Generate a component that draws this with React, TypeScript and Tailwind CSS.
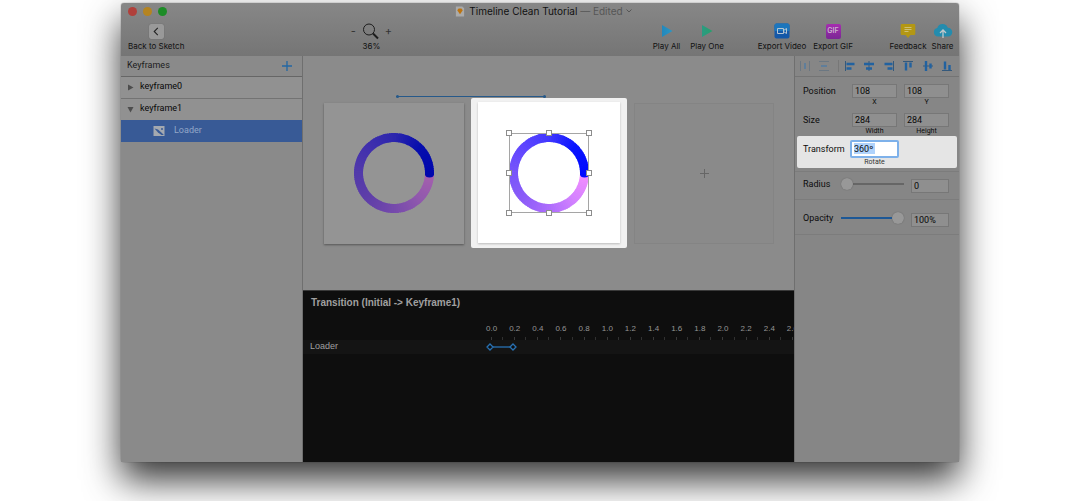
import type { ReactNode } from "react";
import clsx from "clsx";

const TICKS = ["0.0", "0.2", "0.4", "0.6", "0.8", "1.0", "1.2", "1.4", "1.6", "1.8", "2.0", "2.2", "2.4", "2.6"];

// Ring colors, counter-clockwise starting at 3 o'clock
const STOPS = [
  [0, 10, 255],
  [10, 20, 255],
  [66, 56, 255],
  [95, 70, 255],
  [120, 85, 250],
  [140, 92, 248],
  [172, 108, 252],
  [212, 130, 255],
  [244, 142, 255],
];

function ringColor(t: number) {
  const pos = t * (STOPS.length - 1);
  const i = Math.min(Math.floor(pos), STOPS.length - 2);
  const [r, g, b] = STOPS[i].map((c, k) => Math.round(c + (STOPS[i + 1][k] - c) * (pos - i)));
  return `rgb(${r},${g},${b})`;
}

function Loader() {
  const n = 120;
  const point = (a: number) => `${40 + 35.5 * Math.cos(a)} ${40 - 35.5 * Math.sin(a)}`;
  return (
    <svg viewBox="0 0 80 80" className="size-20" fill="none" strokeWidth="9">
      {Array.from({ length: n }, (_, i) => {
        const a = (i / n) * Math.PI * 2;
        const b = Math.min(((i + 1.4) / n) * Math.PI * 2, Math.PI * 2);
        return <path key={i} d={`M${point(a)} A35.5 35.5 0 0 0 ${point(b)}`} stroke={ringColor(i / (n - 1))} />;
      })}
      <path d="M71 39.5h9v2q-.3 3-4.500 3t-4.500-3z" fill="#000aff" stroke="none" />
    </svg>
  );
}

function Selection() {
  const spots = [0, 40, 80];
  return (
    <svg viewBox="-3 -3 86 86" className="absolute size-[86px]" fill="none">
      <rect x="0.500" y="0.500" width="79" height="79" stroke="#a5a5a5" />
      {spots.flatMap(x =>
        spots
          .filter(y => !(x === 40 && y === 40))
          .map(y => (
            <rect key={`${x}-${y}`} x={x - 2.5} y={y - 2.5} width="5" height="5" fill="#fff" stroke="#8c8c8c" />
          ))
      )}
    </svg>
  );
}

function Tool({ label, className, children }: { label: string; className?: string; children: ReactNode }) {
  return (
    <button className={clsx("flex shrink-0 flex-col items-center gap-[2px] whitespace-nowrap", className)}>
      <span className="flex h-4 items-center justify-center">{children}</span>
      <span className="text-[8px] leading-[10px]">{label}</span>
    </button>
  );
}

function PlayIcon({ from, to, id }: { from: string; to: string; id: string }) {
  return (
    <svg viewBox="0 0 12 14" className="h-[14px] w-3">
      <defs>
        <linearGradient id={id} x1="0" x2="1">
          <stop stopColor={from} />
          <stop offset="1" stopColor={to} />
        </linearGradient>
      </defs>
      <path d="M1 1l10.500 6L1 13z" fill={`url(#${id})`} />
    </svg>
  );
}

function Toolbar() {
  return (
    <header className="h-[53px] rounded-t-[3px] bg-linear-to-b from-[#878787] to-[#757575] text-[#111]">
      <div className="grid h-4 grid-cols-[1fr_auto_1fr] items-center pl-[7px]">
        <div className="flex gap-[6px]">
          <button aria-label="Close" className="size-[9px] rounded-full bg-[#b0403b]" />
          <button aria-label="Minimize" className="size-[9px] rounded-full bg-[#b58420]" />
          <button aria-label="Zoom" className="size-[9px] rounded-full bg-[#1c8c26]" />
        </div>
        <h1 className="flex items-center gap-1 text-[10px] leading-4">
          <svg viewBox="0 0 10 12" className="h-[11px] w-[10px]">
            <path d="M.5 .5H7.500L9.500 2.500v9h-9z" fill="#aaa" />
            <path d="M2 4.500l1.500-1.700h3L8 4.500 5 9z" fill="#bd7410" />
          </svg>
          <span>
            Timeline Clean Tutorial <span className="text-[#565656]">— Edited</span>
          </span>
          <svg viewBox="0 0 6 4" className="-ml-px h-1 w-[6px]" fill="none" stroke="#565656">
            <path d="M.5.5L3 3 5.500.5" />
          </svg>
        </h1>
      </div>
      <div className="flex items-start pt-1 pr-[5px] pl-[7px]">
        <Tool label="Back to Sketch">
          <span className="flex size-[15px] items-center justify-center rounded-[2px] bg-[#999] shadow-[0_0_1px_#555]">
            <svg viewBox="0 0 6 10" className="h-[9px] w-[6px]" fill="none" stroke="#222" strokeWidth="1.200">
              <path d="M5 1L1 5l4 4" />
            </svg>
          </span>
        </Tool>
        <div className="ml-[167px] flex w-10 flex-col items-center gap-[2px]">
          <div className="flex h-4 items-center gap-[6px] text-[11px] leading-4 text-[#333]">
            <button aria-label="Zoom out">-</button>
            <svg viewBox="0 0 17 17" className="size-[17px]" fill="none" stroke="#1c1c1c">
              <circle cx="7" cy="6.500" r="5.500" />
              <path d="M11 10.500l5 5" strokeWidth="2" />
            </svg>
            <button aria-label="Zoom in">+</button>
          </div>
          <span className="text-[8px] leading-[10px]">36%</span>
        </div>
        <div className="ml-auto flex">
          <Tool label="Play All" className="w-[29px]">
            <PlayIcon id="playAll" from="#2387bb" to="#2a97c4" />
          </Tool>
          <Tool label="Play One" className="ml-2 w-[36px]">
            <PlayIcon id="playOne" from="#2b9a82" to="#27a06c" />
          </Tool>
          <Tool label="Export Video" className="ml-[32px] w-[50px]">
            <svg viewBox="0 0 16 16" className="size-4">
              <rect x="0.500" y="0.500" width="15" height="15" rx="2" fill="#1458a8" />
              <path d="M.5 8V2.500a2 2 0 012-2h11a2 2 0 012 2V8z" fill="#1b76bd" />
              <path d="M3.500 5.500h6v5h-6zM9.500 7.500l3-2v5l-3-2" fill="none" stroke="#b4c5d2" />
            </svg>
          </Tool>
          <Tool label="Export GIF" className="ml-[5px] w-[42px]">
            <span className="flex size-[15px] items-center justify-center rounded-[2px] bg-linear-to-b from-[#a62db0] to-[#7b2695] text-[7px] font-semibold text-[#c9b3cd]">
              GIF
            </span>
          </Tool>
          <Tool label="Feedback" className="ml-[35px] w-[38px]">
            <svg viewBox="0 0 16 16" className="size-4">
              <path d="M2 1h12q1.300 0 1.300 1.300v8.400q0 1.300-1.300 1.300h-3.500L8 15l-2.500-3H2Q.7 12 .7 10.700V2.300Q.7 1 2 1z" fill="#b39714" />
              <path d="M4.500 4.500h7M4.500 6.500h7M4.500 8.500h4" stroke="#cdbf75" />
            </svg>
          </Tool>
          <Tool label="Share" className="ml-[4px] w-[23px]">
            <svg viewBox="0 0 20 16" className="h-4 w-5">
              <path d="M5 13.500a4.300 4.300 0 01-.7-8.500A5.500 5.500 0 0114.800 4.700 4.400 4.400 0 0115 13.500z" fill="#248cae" />
              <path d="M10 15V7.500M7 10l3-3 3 3" fill="none" stroke="#c0c8cb" strokeWidth="1.300" />
            </svg>
          </Tool>
        </div>
      </div>
    </header>
  );
}

function Sidebar() {
  return (
    <nav className="w-[182px] shrink-0 border-r border-[#6f6f6f] bg-[#8a8a8a] font-[Roboto,sans-serif] text-[9px]">
      <div className="flex h-[21px] items-center justify-between border-b border-[#666] pr-[10px] pl-[6px]">
        <h2>Keyframes</h2>
        <button aria-label="Add keyframe">
          <svg viewBox="0 0 10 10" className="size-[10px]" stroke="#2367a4" strokeWidth="1.300">
            <path d="M5 0v10M0 5h10" />
          </svg>
        </button>
      </div>
      <ul className="text-[#080808]">
        <li className="flex h-[22px] items-center gap-[6px] border-b border-[#737373] bg-[#919191] pb-px pl-[6px]">
          <svg viewBox="0 0 7 7" className="size-[7px]" fill="#4d4d4d">
            <path d="M1 .5L6.500 3.500 1 6.500z" />
          </svg>
          keyframe0
        </li>
        <li className="flex h-[21px] items-center gap-[6px] bg-[#919191] pb-px pl-[6px]">
          <svg viewBox="0 0 7 7" className="size-[7px]" fill="#4d4d4d">
            <path d="M.5 1h6L3.500 6.500z" />
          </svg>
          keyframe1
        </li>
        <li className="flex h-[22px] items-center gap-[9px] bg-[#385a96] pb-px pl-8 text-[#93a7c8]">
          <svg viewBox="0 0 12 10" className="h-[10px] w-3">
            <path d="M.5 0h11v10H.5z" fill="#a4a9b0" />
            <path d="M1.500 2.500l3.500 1 5.500 5V9H8.500L5 6.500z" fill="#385a96" />
            <circle cx="9" cy="3" r="1" fill="#385a96" />
          </svg>
          Loader
        </li>
      </ul>
    </nav>
  );
}

function Canvas() {
  return (
    <section className="h-[234px] bg-[#8b8b8b] pt-[39px]">
      <div className="ml-[93px] flex h-[3px] w-[150px] items-center justify-between bg-[linear-gradient(#26598a,#26598a)] bg-[length:100%_1px] bg-center bg-no-repeat">
        <span className="size-[3px] rounded-full bg-[#26598a]" />
        <span className="size-[3px] rounded-full bg-[#26598a]" />
      </div>
      <div className="flex items-center gap-[7px] pl-[21px]">
        <div className="flex h-[141px] w-[140px] shrink-0 items-center justify-center bg-[#949494] shadow-[0_1px_2px_#555]">
          <div className="brightness-[0.68]">
            <Loader />
          </div>
        </div>
        <div className="shrink-0 rounded-[2px] bg-[#f1f1f1] px-[7px] pt-1 pb-[5px]">
          <div className="relative flex h-[141px] w-[142px] items-center justify-center bg-white shadow-[0_1px_2px_#bbb]">
            <Loader />
            <Selection />
          </div>
        </div>
        <button
          aria-label="Add keyframe"
          className="flex h-[141px] w-[140px] shrink-0 items-center justify-center border border-[#848484] bg-[#8a8a8a]"
        >
          <svg viewBox="0 0 9 9" className="size-[9px]" stroke="#666">
            <path d="M4.500 0v9M0 4.500h9" />
          </svg>
        </button>
      </div>
    </section>
  );
}

function Timeline() {
  return (
    <section className="min-h-[172px] flex-1 overflow-hidden border-t border-[#3a3a3a] bg-[#0e0e0e] font-['Liberation_Sans',sans-serif] text-[#a0a0a0]">
      <h2 className="pt-[6px] pl-2 text-[10px] leading-3 font-bold">{"Transition (Initial -> Keyframe1)"}</h2>
      <div className="mt-[15px] ml-[177px] grid w-[324px] grid-cols-14">
        {TICKS.map(t => (
          <div key={t}>
            <div className="text-center text-[8px] leading-[10px] text-[#959595]">{t}</div>
            <div className="mt-[3px] flex h-[3px] justify-between">
              <span className="ml-[11px] w-px bg-[#383838]" />
              <span className="w-px bg-[#303030]" />
            </div>
          </div>
        ))}
      </div>
      <div className="flex h-[14px] items-center bg-[#141414] pl-[7px] text-[9px]">
        <span className="w-[176px]">Loader</span>
        <svg viewBox="0 0 32 8" className="h-2 w-8" fill="#0e0e0e" stroke="#2871b3" strokeWidth="1.300">
          <path d="M7 4h18" />
          <path d="M4 1l3 3-3 3-3-3zM27 1l3 3-3 3-3-3z" />
        </svg>
      </div>
    </section>
  );
}

const ALIGNMENTS = [
  { label: "Distribute horizontally", dim: true, thin: "M1.500 1v10M10.500 1v10", thick: "M6 3v6" },
  { label: "Distribute vertically", dim: true, thin: "M1 1.500h10M1 10.500h10", thick: "M3 6h6" },
  { label: "Align left", thin: "M1.500 1v10", thick: "M2.500 4h8M2.500 8.500h5" },
  { label: "Align center", thin: "M6 1v10", thick: "M1 4h10M3 8.500h6" },
  { label: "Align right", thin: "M10.500 1v10", thick: "M1.500 4h8M4.500 8.500h5" },
  { label: "Align top", thin: "M1 1.500h10", thick: "M4 2.500v8M8.500 2.500v5" },
  { label: "Align middle", thin: "M1 6h10", thick: "M4 1v10M8.500 3.500v5" },
  { label: "Align bottom", thin: "M1 10.500h10", thick: "M4 1.500v8M8.500 5v5" },
];

const INPUT = "h-[14px] border border-[#777] bg-[#8f8f8f] px-[2px] text-[9px] text-[#080808]";

function Field({ label, caption, value }: { label: string; caption: string; value: string }) {
  return (
    <label className="flex w-[45px] flex-col items-center">
      <input aria-label={label} defaultValue={value} className={clsx(INPUT, "w-full")} />
      <span className="text-[7px] leading-[9px]">{caption}</span>
    </label>
  );
}

const SLIDER =
  "m-0 h-3 w-full appearance-none bg-transparent bg-[length:100%_2px] bg-center bg-no-repeat [&::-webkit-slider-thumb]:size-3 [&::-webkit-slider-thumb]:appearance-none [&::-webkit-slider-thumb]:rounded-full [&::-webkit-slider-thumb]:bg-[#989898] [&::-webkit-slider-thumb]:shadow-[0_0_1px_#555]";

function Inspector() {
  return (
    <aside className="w-[165px] shrink-0 border-l border-[#6f6f6f] bg-[#868686] font-[Roboto,sans-serif] text-[9px] leading-[14px] text-[#0c0c0c]">
      <div className="flex h-[21px] items-center justify-between border-b border-[#747474] pr-[6px] pl-1">
        {ALIGNMENTS.map((a, i) => (
          <button key={a.label} aria-label={a.label} className={clsx(i === 2 && "border-l border-[#777] pl-[5px]")}>
            <svg viewBox="0 0 12 12" className="size-3" fill="none">
              <path d={a.thin} stroke={a.dim ? "#6b7782" : "#34597c"} />
              <path d={a.thick} stroke={a.dim ? "#527ba2" : "#2262a0"} strokeWidth={a.dim ? 1.5 : 2.4} />
            </svg>
          </button>
        ))}
      </div>
      <div className="flex justify-between pt-[7px] pr-[10px] pl-2">
        <span className="w-[42px]">Position</span>
        <Field label="Position X" caption="X" value="108" />
        <Field label="Position Y" caption="Y" value="108" />
      </div>
      <div className="flex justify-between pt-[6px] pr-[10px] pl-2">
        <span className="w-[42px]">Size</span>
        <Field label="Width" caption="Width" value="284" />
        <Field label="Height" caption="Height" value="284" />
      </div>
      <div className="mx-[2px] flex h-8 gap-[5px] rounded-[2px] bg-[#e5e5e5] pt-1 pl-[6px]">
        <label htmlFor="rotate" className="w-[42px] pt-[2px]">
          Transform
        </label>
        <div className="flex flex-col items-center">
          <input
            id="rotate"
            defaultValue="360º"
            className="h-[18px] w-[49px] rounded-[2px] border-2 border-[#7eb1ea] bg-white bg-[linear-gradient(#b0d3fc,#b0d3fc)] bg-[length:21px_11px] bg-[position:2px_1px] bg-no-repeat px-[2px] text-[9px]"
          />
          <span className="text-[7px] leading-[9px] text-[#333]">Rotate</span>
        </div>
      </div>
      <div className="mt-[3px] flex border-y border-[#7c7c7c] pt-[5px] pr-[10px] pb-[6px] pl-2">
        <label htmlFor="radius" className="w-[38px]">
          Radius
        </label>
        <div className="flex flex-1 pt-px pr-[7px]">
          <input
            id="radius"
            type="range"
            defaultValue={0}
            className={clsx(SLIDER, "bg-[linear-gradient(#666,#666)]")}
          />
        </div>
        <input aria-label="Radius value" defaultValue="0" className={clsx(INPUT, "mt-[2px] w-[38px]")} />
      </div>
      <div className="flex border-b border-[#7c7c7c] pt-[11px] pr-[10px] pb-[7px] pl-2">
        <label htmlFor="opacity" className="w-[38px]">
          Opacity
        </label>
        <div className="flex flex-1 pt-px pr-[7px]">
          <input
            id="opacity"
            type="range"
            defaultValue={100}
            className={clsx(SLIDER, "bg-[linear-gradient(#1d5896,#1d5896)]")}
          />
        </div>
        <input aria-label="Opacity value" defaultValue="100%" className={clsx(INPUT, "mt-[2px] w-[38px]")} />
      </div>
    </aside>
  );
}

export default function App() {
  return (
    <div className="overflow-hidden bg-white px-[121px] pt-[3px] pb-[39px] font-[Inter,sans-serif] text-[#1c1c1c]">
      <div className="rounded-[3px] shadow-[0_18px_36px_rgba(0,0,0,0.8),0_0_1px_#444]">
        <Toolbar />
        <div className="flex">
          <Sidebar />
          <main className="flex min-w-0 flex-1 flex-col overflow-hidden">
            <Canvas />
            <Timeline />
          </main>
          <Inspector />
        </div>
      </div>
    </div>
  );
}
